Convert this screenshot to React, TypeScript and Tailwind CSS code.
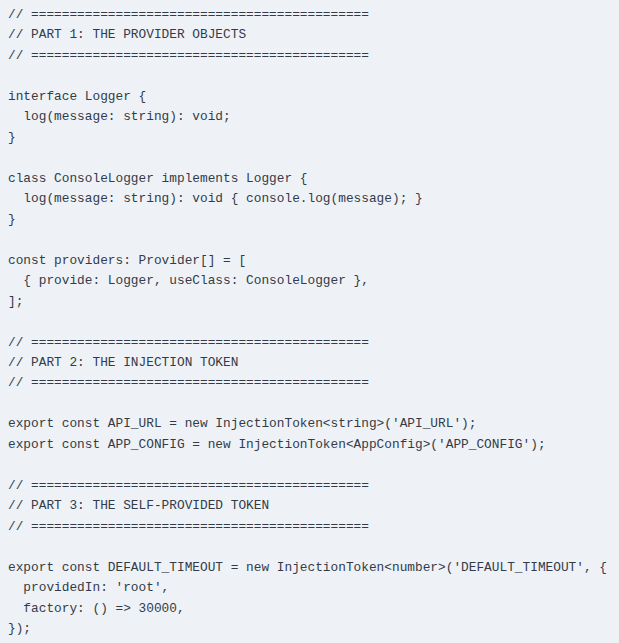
const code = `// ============================================
// PART 1: THE PROVIDER OBJECTS
// ============================================

interface Logger {
  log(message: string): void;
}

class ConsoleLogger implements Logger {
  log(message: string): void { console.log(message); }
}

const providers: Provider[] = [
  { provide: Logger, useClass: ConsoleLogger },
];

// ============================================
// PART 2: THE INJECTION TOKEN
// ============================================

export const API_URL = new InjectionToken<string>('API_URL');
export const APP_CONFIG = new InjectionToken<AppConfig>('APP_CONFIG');

// ============================================
// PART 3: THE SELF-PROVIDED TOKEN
// ============================================

export const DEFAULT_TIMEOUT = new InjectionToken<number>('DEFAULT_TIMEOUT', {
  providedIn: 'root',
  factory: () => 30000,
});`;

export default function App() {
  return (
    <div className="w-[619px] h-[643px] overflow-hidden bg-[#eef2f7]">
      <pre className="m-0 px-2 pt-[5px] font-['Liberation_Mono',monospace] text-[12.8px] leading-[20.47px] text-[#333b48] whitespace-pre">
        {code}
      </pre>
    </div>
  );
}
